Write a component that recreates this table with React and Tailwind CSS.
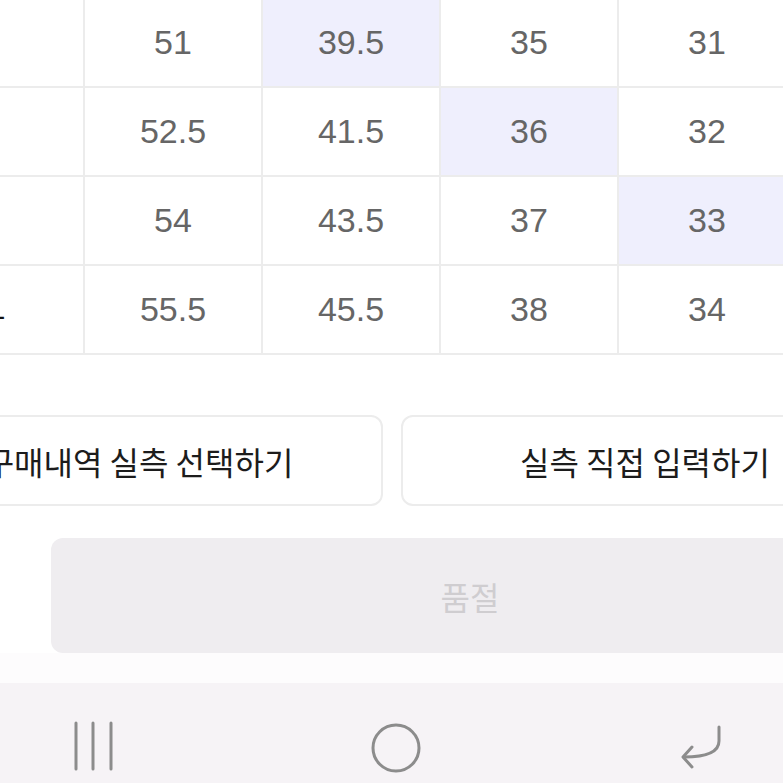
const rows = [
  { label: "", values: ["51", "39.5", "35", "31"], hl: 1 },
  { label: "", values: ["52.5", "41.5", "36", "32"], hl: 2 },
  { label: "", values: ["54", "43.5", "37", "33"], hl: 3 },
  { label: "XL", values: ["55.5", "45.5", "38", "34"], hl: -1 },
];

function SizeTable() {
  return (
    <div className="ml-[-93px] mt-[-1px] w-[890px]">
      {rows.map((row, i) => (
        <div key={i} className="flex h-[89px] border-b-2 border-[#ececec]">
          <div className="w-[178px] flex items-center justify-end pr-[78px] border-r-2 border-[#ececec] text-[29px] text-[#111]">
            {row.label}
          </div>
          {row.values.map((v, j) => (
            <div
              key={j}
              className={
                j === row.hl
                  ? "w-[178px] flex items-center justify-center border-r-2 border-[#ececec] bg-[#efeffd] text-[34px] text-[#666]"
                  : "w-[178px] flex items-center justify-center border-r-2 border-[#ececec] text-[34px] text-[#666]"
              }
            >
              {v}
            </div>
          ))}
        </div>
      ))}
    </div>
  );
}

export default function App() {
  return (
    <div
      className="w-[783px] h-[783px] overflow-hidden bg-white flex flex-col"
      style={{ fontFamily: '"Liberation Sans", "Noto Sans CJK KR", sans-serif' }}
    >
      <SizeTable />

      {/* 실측 버튼 */}
      <div className="flex gap-[18px] ml-[-105px] mt-[60px]">
        <button className="w-[488px] h-[91px] shrink-0 rounded-[12px] border-2 border-[#ececec] bg-white text-[32px] text-[#1c1c1c] font-['Noto_Sans_CJK_KR',sans-serif]">
          구매내역 실측 선택하기
        </button>
        <button className="w-[488px] h-[91px] shrink-0 rounded-[12px] border-2 border-[#ececec] bg-white text-[32px] text-[#1c1c1c] font-['Noto_Sans_CJK_KR',sans-serif]">
          실측 직접 입력하기
        </button>
      </div>

      {/* 품절 */}
      <div className="ml-[51px] mt-[32px] w-[838px] h-[115px] shrink-0 rounded-[12px] bg-[#efedf0] flex items-center justify-center">
        <span className="text-[32px] text-[#cfcdd0] font-['Noto_Sans_CJK_KR',sans-serif]">품절</span>
      </div>
      <div className="h-[30px] shrink-0 bg-[#fdfcfd]" />

      {/* 하단 내비게이션 */}
      <div className="h-[100px] shrink-0 bg-[#f6f3f6] flex items-start pt-[38px]">
        <svg className="ml-[70px]" width="48" height="50" viewBox="0 0 48 50" fill="none" stroke="#8c8c8c" strokeWidth="3" strokeLinecap="round">
          <path d="M6 2V48M23 2V48M41 2V48" />
        </svg>
        <svg className="ml-[252px]" width="52" height="54" viewBox="0 0 52 54" fill="none" stroke="#8c8c8c" strokeWidth="3">
          <circle cx="26" cy="27" r="23" />
        </svg>
        <svg className="ml-[254px]" width="50" height="50" viewBox="0 0 50 50" fill="none" stroke="#8c8c8c" strokeWidth="3" strokeLinecap="round" strokeLinejoin="round">
          <path d="M43 6V20Q43 36 8 36" />
          <path d="M16 26L7 36L16 46" />
        </svg>
      </div>
    </div>
  );
}
